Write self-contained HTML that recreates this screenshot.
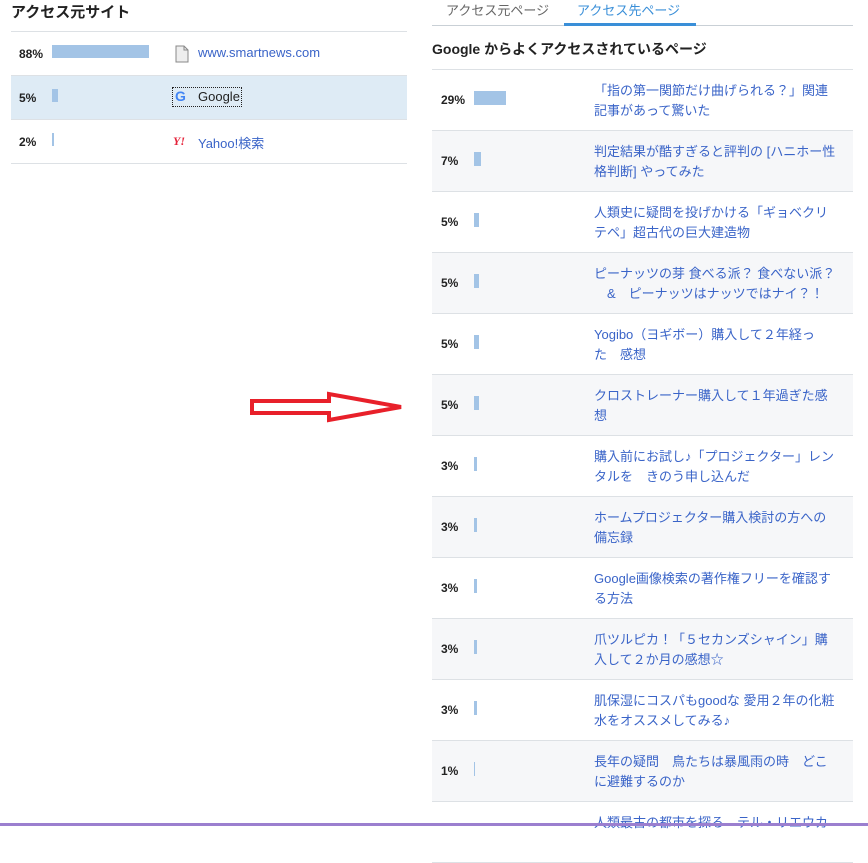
<!DOCTYPE html>
<html><head><meta charset="utf-8"><style>
*{margin:0;padding:0;box-sizing:border-box}
body{width:868px;height:826px;background:#fff;position:relative;overflow:hidden;font-family:"Liberation Sans","Noto Sans CJK JP",sans-serif;font-size:13px;color:#222}
.a{position:absolute}
a{color:#3a64c8;text-decoration:none}
.h{font-weight:bold;font-size:15px;color:#222}
.lrow{position:absolute;left:11px;width:396px;height:44px;border-bottom:1px solid #dde1e5}
.pct{position:absolute;font-size:12px;font-weight:bold;color:#222}
.bar{position:absolute;background:#a3c4e6;height:13px}
.rrow{position:absolute;left:432px;width:421px;height:61px;border-bottom:1px solid #dde1e5}
.rrow .pct{left:9px;top:23px}
.rrow .bar{left:42px;top:21px;height:14px}
.rrow a{position:absolute;left:162px;top:11px;white-space:nowrap;line-height:20px;font-size:13px}
.g{background:#f6f7f9}
</style></head><body>
<div class="a h" style="left:11px;top:1px;font-size:15px">アクセス元サイト</div>
<div class="a" style="left:11px;top:31px;width:396px;border-top:1px solid #dde1e5"></div>
<div class="lrow" style="top:32px"><span class="pct" style="left:8px;top:15px">88%</span><div class="bar" style="left:41px;top:13px;width:97px"></div>
<svg class="a" style="left:164px;top:13px" width="14" height="18"><path d="M1 1h8l4 4v12H1z" fill="#eee" stroke="#888"/><path d="M9 1v4h4" fill="none" stroke="#888"/></svg>
<a class="a" style="left:187px;top:13px">www.smartnews.com</a></div>
<div class="lrow" style="top:76px;background:#deebf5"><span class="pct" style="left:8px;top:15px">5%</span><div class="bar" style="left:41px;top:13px;width:6px"></div>
<div class="a" style="left:161px;top:11px;width:70px;height:20px;border:1px dotted #222"></div>
<span class="a" style="left:164px;top:12px;font-weight:bold;font-size:14px;color:#4285f4">G</span>
<span class="a" style="left:187px;top:13px;color:#222">Google</span></div>
<div class="lrow" style="top:120px"><span class="pct" style="left:8px;top:15px">2%</span><div class="bar" style="left:41px;top:13px;width:2px"></div>
<span class="a" style="left:162px;top:14px;font-weight:bold;font-style:italic;font-size:12px;color:#e5243b;font-family:'Liberation Serif',serif">Y!</span>
<a class="a" style="left:187px;top:13px">Yahoo!検索</a></div>

<div class="a" style="left:446px;top:0px;color:#666;font-size:13px">アクセス元ページ</div>
<div class="a" style="left:577px;top:0px;color:#3a8fd8;font-size:13px">アクセス先ページ</div>
<div class="a" style="left:432px;top:25px;width:421px;border-top:1px solid #c9d0d6"></div>
<div class="a" style="left:564px;top:23px;width:132px;height:3px;background:#3a8fd8"></div>
<div class="a h" style="left:432px;top:39px;font-size:14px">Google からよくアクセスされているページ</div>
<div class="a" style="left:432px;top:69px;width:421px;border-top:1px solid #dde1e5"></div>

<div class="rrow" style="top:70px"><span class="pct">29%</span><div class="bar" style="width:32px"></div><a>「指の第一関節だけ曲げられる？」関連<br>記事があって驚いた</a></div>
<div class="rrow g" style="top:131px"><span class="pct">7%</span><div class="bar" style="width:7px"></div><a>判定結果が酷すぎると評判の [ハニホー性<br>格判断] やってみた</a></div>
<div class="rrow" style="top:192px"><span class="pct">5%</span><div class="bar" style="width:5px"></div><a>人類史に疑問を投げかける「ギョベクリ<br>テペ」超古代の巨大建造物</a></div>
<div class="rrow g" style="top:253px"><span class="pct">5%</span><div class="bar" style="width:5px"></div><a>ピーナッツの芽 食べる派？ 食べない派？<br>　&amp;　ピーナッツはナッツではナイ？！</a></div>
<div class="rrow" style="top:314px"><span class="pct">5%</span><div class="bar" style="width:5px"></div><a>Yogibo（ヨギボー）購入して２年経っ<br>た　感想</a></div>
<div class="rrow g" style="top:375px"><span class="pct">5%</span><div class="bar" style="width:5px"></div><a>クロストレーナー購入して１年過ぎた感<br>想</a></div>
<div class="rrow" style="top:436px"><span class="pct">3%</span><div class="bar" style="width:3px"></div><a>購入前にお試し♪「プロジェクター」レン<br>タルを　きのう申し込んだ</a></div>
<div class="rrow g" style="top:497px"><span class="pct">3%</span><div class="bar" style="width:3px"></div><a>ホームプロジェクター購入検討の方への<br>備忘録</a></div>
<div class="rrow" style="top:558px"><span class="pct">3%</span><div class="bar" style="width:3px"></div><a>Google画像検索の著作権フリーを確認す<br>る方法</a></div>
<div class="rrow g" style="top:619px"><span class="pct">3%</span><div class="bar" style="width:3px"></div><a>爪ツルピカ！「５セカンズシャイン」購<br>入して２か月の感想☆</a></div>
<div class="rrow" style="top:680px"><span class="pct">3%</span><div class="bar" style="width:3px"></div><a>肌保湿にコスパもgoodな 愛用２年の化粧<br>水をオススメしてみる♪</a></div>
<div class="rrow g" style="top:741px"><span class="pct">1%</span><div class="bar" style="width:1px"></div><a>長年の疑問　鳥たちは暴風雨の時　どこ<br>に避難するのか</a></div>
<div class="rrow" style="top:802px"><a>人類最古の都市を探る　テル・リエウカ</a></div>
<div class="a" style="left:0;top:823px;width:868px;height:3px;background:#9b7fcf"></div>

<svg class="a" style="left:245px;top:388px" width="165" height="40"><polygon points="7,13 84,13 84,6 156,19 84,32 84,25 7,25" fill="none" stroke="#e8202a" stroke-width="4"/></svg>
</body></html>
